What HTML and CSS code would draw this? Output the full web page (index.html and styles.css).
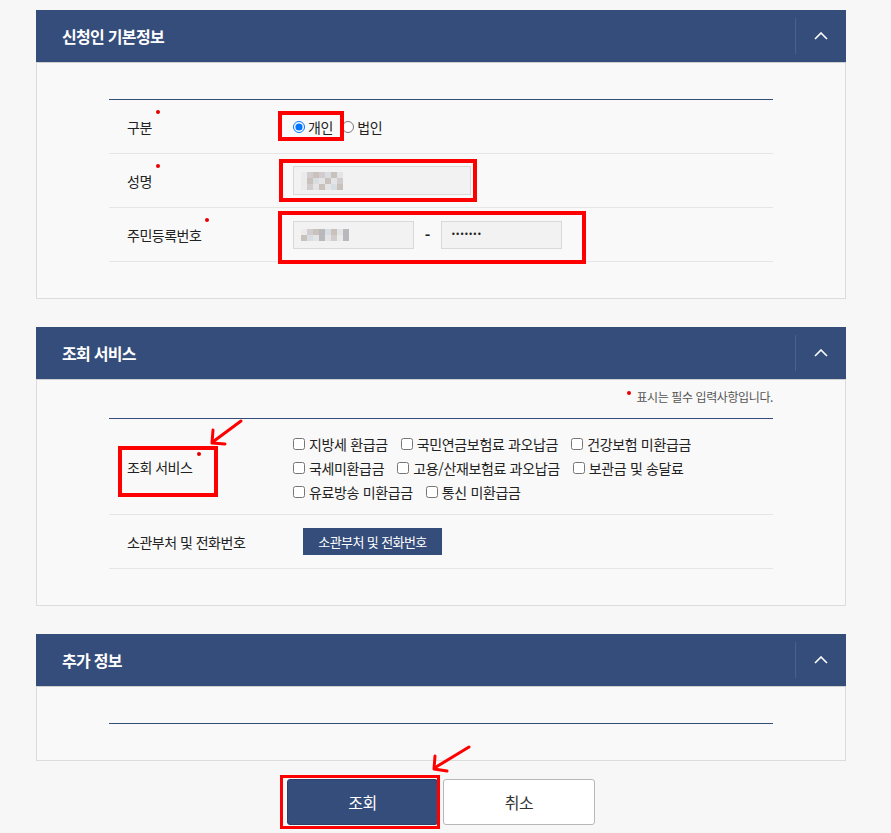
FILE: index.html
```html
<!DOCTYPE html>
<html lang="ko">
<head>
<meta charset="utf-8">
<title>조회</title>
<link rel="stylesheet" href="styles.css">
</head>
<body>
<div class="page">
  <section class="panel">
    <div class="panel-head">
      <h2>신청인 기본정보</h2>
      <span class="toggle"><svg width="14" height="8" viewBox="0 0 14 8"><polyline points="1,7 7,1 13,7" fill="none" stroke="#fff" stroke-width="1.6"/></svg></span>
    </div>
    <div class="panel-body">
      <div class="form-table">
        <div class="row">
          <div class="label">구분<span class="req"></span></div>
          <div class="value">
            <label class="radio"><input type="radio" name="kind" checked>개인</label>
            <label class="radio"><input type="radio" name="kind">법인</label>
          </div>
        </div>
        <div class="row">
          <div class="label">성명<span class="req"></span></div>
          <div class="value">
            <div class="field field-name"><span class="mz mz-name"><i></i><i></i><i></i><i></i><i></i><i></i><i></i><i></i><i></i><i></i><i></i><i></i><i></i><i></i><i></i><i></i><i></i><i></i><i></i><i></i><i></i></span></div>
          </div>
        </div>
        <div class="row">
          <div class="label">주민등록번호<span class="req"></span></div>
          <div class="value">
            <div class="field field-id"><span class="mz mz-id"><i></i><i></i><i></i><i></i><i></i><i></i><i></i><i></i><i></i><i></i><i></i><i></i><i></i><i></i><i></i><i></i></span></div>
            <span class="dash">-</span>
            <div class="field field-id"><span class="pw">•••••••</span></div>
          </div>
        </div>
      </div>
    </div>
  </section>

  <section class="panel">
    <div class="panel-head">
      <h2>조회 서비스</h2>
      <span class="toggle"><svg width="14" height="8" viewBox="0 0 14 8"><polyline points="1,7 7,1 13,7" fill="none" stroke="#fff" stroke-width="1.6"/></svg></span>
    </div>
    <div class="panel-body body-note">
      <p class="note"><span class="note-dot"></span>표시는 필수 입력사항입니다.</p>
      <div class="form-table">
        <div class="row row-tall">
          <div class="label">조회 서비스<span class="req req-low"></span></div>
          <div class="value checks">
            <label class="check"><input type="checkbox">지방세 환급금</label>
            <label class="check"><input type="checkbox">국민연금보험료 과오납금</label>
            <label class="check"><input type="checkbox">건강보험 미환급금</label>
            <label class="check"><input type="checkbox">국세미환급금</label>
            <label class="check"><input type="checkbox">고용/산재보험료 과오납금</label>
            <label class="check"><input type="checkbox">보관금 및 송달료</label>
            <label class="check"><input type="checkbox">유료방송 미환급금</label>
            <label class="check"><input type="checkbox">통신 미환급금</label>
          </div>
        </div>
        <div class="row">
          <div class="label">소관부처 및 전화번호</div>
          <div class="value">
            <button class="btn-dept" type="button">소관부처 및 전화번호</button>
          </div>
        </div>
      </div>
    </div>
  </section>

  <section class="panel panel-last">
    <div class="panel-head">
      <h2>추가 정보</h2>
      <span class="toggle"><svg width="14" height="8" viewBox="0 0 14 8"><polyline points="1,7 7,1 13,7" fill="none" stroke="#fff" stroke-width="1.6"/></svg></span>
    </div>
    <div class="panel-body">
      <div class="form-table"></div>
    </div>
  </section>

  <div class="actions">
    <button class="btn btn-main" type="button">조회</button>
    <button class="btn btn-sub" type="button">취소</button>
  </div>

  <div class="mark mark-1"></div>
  <div class="mark mark-2"></div>
  <div class="mark mark-3"></div>
  <div class="mark mark-4"></div>
  <div class="mark mark-5"></div>
  <svg class="arrows" width="891" height="833" viewBox="0 0 891 833">
    <g fill="none" stroke="#f00" stroke-width="3" stroke-linecap="round" stroke-linejoin="round">
      <line x1="241" y1="421" x2="214" y2="441"/>
      <polyline points="213,430 212,443 225,444"/>
      <line x1="469" y1="747" x2="436" y2="767"/>
      <polyline points="435,756 434,769 447,771"/>
    </g>
  </svg>
</div>
</body>
</html>
```

FILE: styles.css
```css
* { box-sizing: border-box; }

body {
  margin: 0;
  background: #f7f7f7;
  font-family: "Noto Sans CJK KR", "Noto Sans", sans-serif;
  color: #333;
}

.page {
  position: relative;
  width: 846px;
  padding: 10px 0 7px 36px;
}

.panel { margin-bottom: 28px; }
.panel-last { margin-bottom: 0; }

.panel-head {
  height: 52px;
  background: #354d7a;
  display: flex;
  align-items: center;
  justify-content: space-between;
  padding-left: 26px;
}

.panel-head h2 {
  margin: 0;
  font-size: 16px;
  font-weight: 700;
  color: #fff;
  letter-spacing: -0.7px;
}

.toggle {
  width: 51px;
  height: 36px;
  border-left: 1px solid #4a6190;
  display: flex;
  align-items: center;
  justify-content: center;
}

.panel-body {
  background: #f9f9f9;
  border: 1px solid #dcdcdc;
  border-top-color: #cfcfcf;
  padding: 36px 72px;
}

.body-note { padding-top: 8px; }

.note {
  margin: 0 0 12px;
  text-align: right;
  font-size: 12px;
  line-height: 18px;
  letter-spacing: -0.4px;
  color: #555;
}

.note-dot {
  display: inline-block;
  width: 4px;
  height: 4px;
  border-radius: 50%;
  background: #e60000;
  vertical-align: 7px;
  margin-right: 5px;
}

.form-table { border-top: 1px solid #354d7a; }

.row {
  display: grid;
  grid-template-columns: 166px 1fr;
  min-height: 54px;
  border-bottom: 1px solid #e6e6e6;
}

.row-tall { min-height: 96px; }

.label {
  display: flex;
  align-items: center;
  padding-left: 18px;
  font-size: 14px;
  letter-spacing: -0.5px;
  color: #222;
}

.req {
  width: 4px;
  height: 4px;
  border-radius: 50%;
  background: #e60000;
  margin: 0 0 30px 4px;
}

.req-low { margin: 0 0 26px 5px; }

.value {
  display: flex;
  align-items: center;
  padding-left: 18px;
  font-size: 14px;
  color: #222;
}

.radio {
  display: flex;
  align-items: center;
  margin-right: 9px;
  letter-spacing: -0.3px;
}

.radio input {
  margin: 0 3px 0 0;
  width: 12px;
  height: 12px;
}

.field {
  height: 29px;
  background: #f2f2f2;
  border: 1px solid #d9d9d9;
  display: flex;
  align-items: center;
  padding-left: 7px;
}

.field-name { width: 178px; }
.field-id { width: 121px; height: 28px; }

.dash {
  width: 27px;
  text-align: center;
  font-weight: 700;
  font-size: 15px;
}

.pw {
  font-family: "DejaVu Sans", sans-serif;
  font-size: 8px;
  letter-spacing: -0.4px;
  color: #222;
  padding-left: 2px;
}

.mz {
  display: inline-grid;
  grid-auto-rows: 6px;
}

.mz-name { grid-template-columns: repeat(7, 6px); }
.mz-id { grid-template-columns: repeat(8, 6px); }

.mz i { display: block; background: #e4e4e6; }
.mz i:nth-child(2n) { background: #d2cccf; }
.mz i:nth-child(3n) { background: #c9c2bc; }
.mz i:nth-child(5n) { background: #d8dde2; }
.mz i:nth-child(7n+1) { background: #ecebec; }
.mz-id i:nth-child(4n) { background: #b9b8bc; }

.checks {
  flex-wrap: wrap;
  align-content: center;
  column-gap: 13px;
  padding-top: 2px;
}

.check {
  display: flex;
  align-items: center;
  height: 24px;
  letter-spacing: -0.35px;
}

.check input {
  margin: 0 4px 0 0;
  width: 12px;
  height: 12px;
}

.btn-dept {
  margin-left: 10px;
  width: 139px;
  height: 27px;
  border: 0;
  background: #354d7a;
  color: #fff;
  font-family: inherit;
  font-size: 13px;
  letter-spacing: -0.6px;
}

.actions {
  display: flex;
  justify-content: center;
  gap: 5px;
  width: 810px;
  margin-top: 18px;
  padding-left: 0;
}

.btn {
  height: 46px;
  border-radius: 3px;
  font-family: inherit;
  font-size: 16px;
  letter-spacing: -0.5px;
}

.btn-main {
  width: 151px;
  background: #354d7a;
  color: #fff;
  border: 1px solid #2b3f66;
}

.btn-sub {
  width: 152px;
  background: #fff;
  color: #333;
  border: 1px solid #b8b8b8;
}

.mark {
  position: absolute;
  border: 4px solid #ff0000;
}

.mark-1 { left: 278px; top: 111px; width: 66px; height: 30px; }
.mark-2 { left: 279px; top: 159px; width: 198px; height: 43px; }
.mark-3 { left: 278px; top: 211px; width: 308px; height: 53px; }
.mark-4 { left: 118px; top: 446px; width: 100px; height: 51px; }
.mark-5 { left: 280px; top: 775px; width: 160px; height: 54px; border-width: 3px; }

.arrows {
  position: absolute;
  left: 0;
  top: 0;
  pointer-events: none;
}
```
